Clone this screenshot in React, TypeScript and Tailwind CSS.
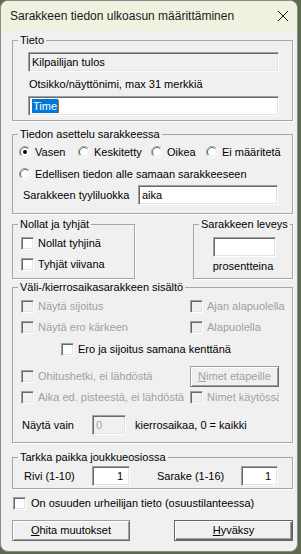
import React from 'react'

const sunken =
  'border border-t-[#a0a0a0] border-l-[#a0a0a0] border-b-white border-r-white shadow-[inset_1px_1px_0_#696969,inset_-1px_-1px_0_#e3e3e3]'

const raised =
  'border border-t-[#a0a0a0] border-l-[#a0a0a0] border-b-[#696969] border-r-[#696969] shadow-[inset_1px_1px_0_#fff,inset_-1px_-1px_0_#a0a0a0]'

const Group = ({ title, className = '', children }: { title: string; className?: string; children: React.ReactNode }) => (
  <fieldset className={`border border-[#a6a6a6] shadow-[1px_1px_0_#fff] ${className}`}>
    <legend className="ml-[5px] px-[2px] leading-[13px] text-[11px] text-black">{title}</legend>
    {children}
  </fieldset>
)

const Check = ({ label, checked = false, disabled = false, className = '' }: { label: string; checked?: boolean; disabled?: boolean; className?: string }) => (
  <div className={`flex items-center gap-[4px] whitespace-nowrap ${disabled ? 'text-[#a0a0a0]' : 'text-black'} ${className}`}>
    <span className={`w-[13px] h-[13px] shrink-0 ${sunken} ${disabled ? 'bg-[#f0f0f0]' : 'bg-white'}`}>
      {checked && (
        <svg width="11" height="11" viewBox="0 0 11 11">
          <path d="M2 5l2 2 4-4" stroke="#000" strokeWidth="1.6" fill="none" />
        </svg>
      )}
    </span>
    <span>{label}</span>
  </div>
)

const Radio = ({ label, checked = false, className = '' }: { label: string; checked?: boolean; className?: string }) => (
  <div className={`flex items-center gap-[4px] whitespace-nowrap ${className}`}>
    <svg width="12" height="12" viewBox="0 0 12 12" className="shrink-0">
      <circle cx="6" cy="6" r="5.5" fill="#fff" />
      <path d="M2.1 9.9A5.5 5.5 0 0 1 9.9 2.1" stroke="#a0a0a0" fill="none" />
      <path d="M2.8 9.2A4.5 4.5 0 0 1 9.2 2.8" stroke="#696969" fill="none" />
      <path d="M9.9 2.1A5.5 5.5 0 0 1 2.1 9.9" stroke="#fff" fill="none" />
      <path d="M9.2 2.8A4.5 4.5 0 0 1 2.8 9.2" stroke="#e3e3e3" fill="none" />
      {checked && <circle cx="6" cy="6" r="2" fill="#000" />}
    </svg>
    <span>{label}</span>
  </div>
)

const Field = ({ value = '', className = '', disabled = false, right = false }: { value?: string; className?: string; disabled?: boolean; right?: boolean }) => (
  <div
    className={`h-[20px] flex items-center px-[3px] shrink-0 ${sunken} ${disabled ? 'bg-[#f0f0f0] text-[#a0a0a0]' : 'bg-white text-black'} ${right ? 'justify-end' : ''} ${className}`}
  >
    {value}
  </div>
)

export default function App() {
  return (
    <div className="w-[301px] h-[554px] bg-[#5d6a4c] overflow-hidden font-['Liberation_Sans',Arial,sans-serif] text-[11px] text-black">
      <div className="w-[298px] h-[552px] bg-[#f0f0f0] border border-[#8c8c8c] rounded-[8px] overflow-hidden flex flex-col">
        {/* title bar */}
        <div className="h-[30px] shrink-0 bg-[#eef2df] flex items-center justify-between pl-[9px] pr-[8px]">
          <span className="text-[12px] text-[#1a1a1a]">Sarakkeen tiedon ulkoasun määrittäminen</span>
          <svg width="12" height="12" viewBox="0 0 12 12">
            <path d="M1 1l10 10M11 1L1 11" stroke="#1a1a1a" strokeWidth="1" fill="none" />
          </svg>
        </div>

        <div className="pl-[11px] w-[292px] flex flex-col">
          <Group title="Tieto" className="mt-[3px]">
            <div className="pl-[15px] pt-[5px] pb-[4px]">
              <Field value="Kilpailijan tulos" disabled className="w-[251px] !text-black" />
              <div className="h-[24px] flex items-center pl-[1px]">Otsikko/näyttönimi, max 31 merkkiä</div>
              <div className={`w-[251px] h-[20px] bg-white flex items-center px-[3px] ${sunken}`}>
                <span className="bg-[#0078d7] text-white leading-[14px] px-[1px]">Time</span>
                <span className="w-[1px] h-[13px] bg-[#b5651d]" />
              </div>
            </div>
          </Group>

          <Group title="Tiedon asettelu sarakkeessa" className="mt-[7px]">
            <div className="pl-[6px] pb-[8px]">
              <div className="h-[22px] flex items-center">
                <Radio label="Vasen" checked className="w-[59px]" />
                <Radio label="Keskitetty" className="w-[73px]" />
                <Radio label="Oikea" className="w-[55px]" />
                <Radio label="Ei määritetä" />
              </div>
              <div className="h-[22px] flex items-center">
                <Radio label="Edellisen tiedon alle samaan sarakkeeseen" />
              </div>
              <div className="h-[20px] flex items-center">
                <span className="w-[119px] pl-[4px]">Sarakkeen tyyliluokka</span>
                <Field value="aika" className="w-[140px]" />
              </div>
            </div>
          </Group>

          <div className="flex justify-between mt-[4px]">
            <Group title="Nollat ja tyhjät" className="w-[123px]">
              <div className="pl-[8px] pt-[2px] pb-[3px]">
                <Check label="Nollat tyhjinä" className="h-[21px]" />
                <Check label="Tyhjät viivana" className="h-[21px]" />
              </div>
            </Group>
            <Group title="Sarakkeen leveys" className="w-[100px]">
              <div className="pt-[6px] flex flex-col items-center">
                <Field className="w-[63px] ml-[3px]" />
                <div className="h-[18px] flex items-center">prosentteina</div>
              </div>
            </Group>
          </div>

          <Group title="Väli-/kierrosaikasarakkeen sisältö" className="mt-[2px]">
            <div className="pl-[8px] pt-[1px] pb-[7px]">
              <div className="h-[22px] flex items-center">
                <Check label="Näytä sijoitus" disabled className="w-[169px]" />
                <Check label="Ajan alapuolella" disabled />
              </div>
              <div className="h-[21px] flex items-center">
                <Check label="Näytä ero kärkeen" disabled className="w-[169px]" />
                <Check label="Alapuolella" disabled />
              </div>
              <div className="h-[22px] flex items-center pl-[40px]">
                <Check label="Ero ja sijoitus samana kenttänä" />
              </div>
              <div className="h-[21px] mt-[6px] flex items-center">
                <Check label="Ohitushetki, ei lähdöstä" disabled className="w-[169px]" />
                <div className={`w-[89px] h-[21px] flex items-center justify-center text-[#a0a0a0] ${raised}`}>
                  <span>
                    <span className="underline">N</span>imet etapeille
                  </span>
                </div>
              </div>
              <div className="h-[21px] flex items-center">
                <Check label="Aika ed. pisteestä, ei lähdöstä" disabled className="w-[169px]" />
                <div className="w-[89px] overflow-hidden">
                  <Check label="Nimet käytössä" disabled />
                </div>
              </div>
              <div className="h-[20px] mt-[7px] flex items-center">
                <span className="w-[71px] pl-[1px]">Näytä vain</span>
                <Field value="0" disabled className="w-[34px]" />
                <span className="ml-[9px]">kierrosaikaa, 0 = kaikki</span>
              </div>
            </div>
          </Group>

          <Group title="Tarkka paikka joukkueosiossa" className="mt-[8px]">
            <div className="pl-[11px] pt-[2px] pb-[2px] h-[24px] flex items-center">
              <span className="w-[68px]">Rivi (1-10)</span>
              <Field value="1" right className="w-[38px] pr-[6px]" />
              <span className="ml-[27px] w-[84px]">Sarake (1-16)</span>
              <Field value="1" right className="w-[37px] pr-[6px]" />
            </div>
          </Group>

          <div className="h-[16px] mt-[6px] flex items-center">
            <Check label="On osuuden urheilijan tieto (osuustilanteessa)" className="ml-[1px] gap-[5px]" />
          </div>

          <div className="h-[21px] mt-[9px] flex justify-between w-[281px]">
            <button className={`w-[118px] h-[21px] bg-[#f0f0f0] text-[11px] ${raised}`}>
              <span className="underline">O</span>hita muutokset
            </button>
            <button className="w-[119px] h-[21px] bg-[#f0f0f0] text-[11px] border border-[#646464] shadow-[inset_1px_1px_0_#fff,inset_-1px_-1px_0_#696969,inset_-2px_-2px_0_#a0a0a0]">
              <span className="underline">H</span>yväksy
            </button>
          </div>
        </div>
      </div>
    </div>
  )
}
